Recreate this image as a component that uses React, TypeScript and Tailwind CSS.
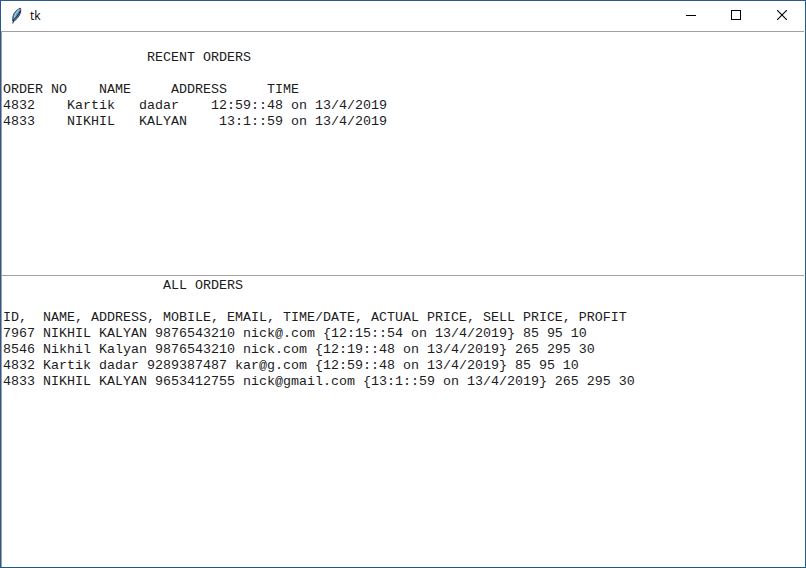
const recentOrders = [
  '',
  '                  RECENT ORDERS',
  '',
  'ORDER NO    NAME     ADDRESS     TIME',
  '4832    Kartik   dadar    12:59::48 on 13/4/2019',
  '4833    NIKHIL   KALYAN    13:1::59 on 13/4/2019',
];

const allOrders = [
  '                    ALL ORDERS',
  '',
  'ID,  NAME, ADDRESS, MOBILE, EMAIL, TIME/DATE, ACTUAL PRICE, SELL PRICE, PROFIT',
  '7967 NIKHIL KALYAN 9876543210 nick@.com {12:15::54 on 13/4/2019} 85 95 10',
  '8546 Nikhil Kalyan 9876543210 nick.com {12:19::48 on 13/4/2019} 265 295 30',
  '4832 Kartik dadar 9289387487 kar@g.com {12:59::48 on 13/4/2019} 85 95 10',
  '4833 NIKHIL KALYAN 9653412755 nick@gmail.com {13:1::59 on 13/4/2019} 265 295 30',
];

function FeatherIcon() {
  return (
    <svg width="16" height="18" viewBox="0 0 16 18" aria-hidden="true">
      <path d="M12.5 1.2C9 2.2 6 5.5 5 9.2L4.6 13.3L5.6 14.4C8.5 12.4 11 9.8 12.2 6.5C12.8 4.7 13 2.6 12.5 1.2Z" fill="#5c8fc0" stroke="#26384c" strokeWidth="0.9" />
      <path d="M11.4 2.6C8.7 4.6 7 7.5 6.4 10.6" fill="none" stroke="#a3c8e6" strokeWidth="1.3" />
      <path d="M12.3 4C11 7.5 8 10.5 5.5 13L4.8 16.5" fill="none" stroke="#14202f" strokeWidth="1" />
    </svg>
  );
}

function TextPane({ lines, className }: { lines: string[]; className: string }) {
  return (
    <section className={`border-t border-l border-t-[#a0a0a0] border-l-[#a0a0a0] pt-0.5 pl-px ${className}`}>
      {lines.map((line, i) => (
        <pre
          key={i}
          className="h-4 font-['Liberation_Mono','Courier_New',monospace] text-[13.333px] leading-4 text-[#1c1c1c]"
        >
          {line}
        </pre>
      ))}
    </section>
  );
}

export default function App() {
  return (
    <main className="flex h-[568px] w-[806px] flex-col border border-[#2b5797] border-r-[#1f5f93] border-b-[#1f5a7d] bg-white">
      <header className="flex h-[30px] shrink-0 items-center">
        <div className="flex flex-1 items-center pl-[7px]">
          <FeatherIcon />
          <h1 className="pl-[6px] font-['Open_Sans',sans-serif] text-xs leading-4 text-black">tk</h1>
        </div>
        <div className="flex h-full pb-0.5">
          <button aria-label="Minimize" className="flex w-[45px] items-center justify-center">
            <svg width="10" height="10" viewBox="0 0 10 10" shapeRendering="crispEdges">
              <path d="M0 5.5H10" stroke="#000" />
            </svg>
          </button>
          <button aria-label="Maximize" className="flex w-[46px] items-center justify-center">
            <svg width="10" height="10" viewBox="0 0 10 10" shapeRendering="crispEdges">
              <path d="M.5 .5H9.5V9.5H.5Z" fill="none" stroke="#000" />
            </svg>
          </button>
          <button aria-label="Close" className="flex w-[46px] items-center justify-center">
            <svg width="10" height="10" viewBox="0 0 10 10">
              <path d="M0 0L10 10M10 0L0 10" stroke="#000" strokeWidth="1.1" />
            </svg>
          </button>
        </div>
      </header>
      <TextPane lines={recentOrders} className="mr-px h-[244px]" />
      <TextPane lines={allOrders} className="mr-px flex-1" />
    </main>
  );
}
